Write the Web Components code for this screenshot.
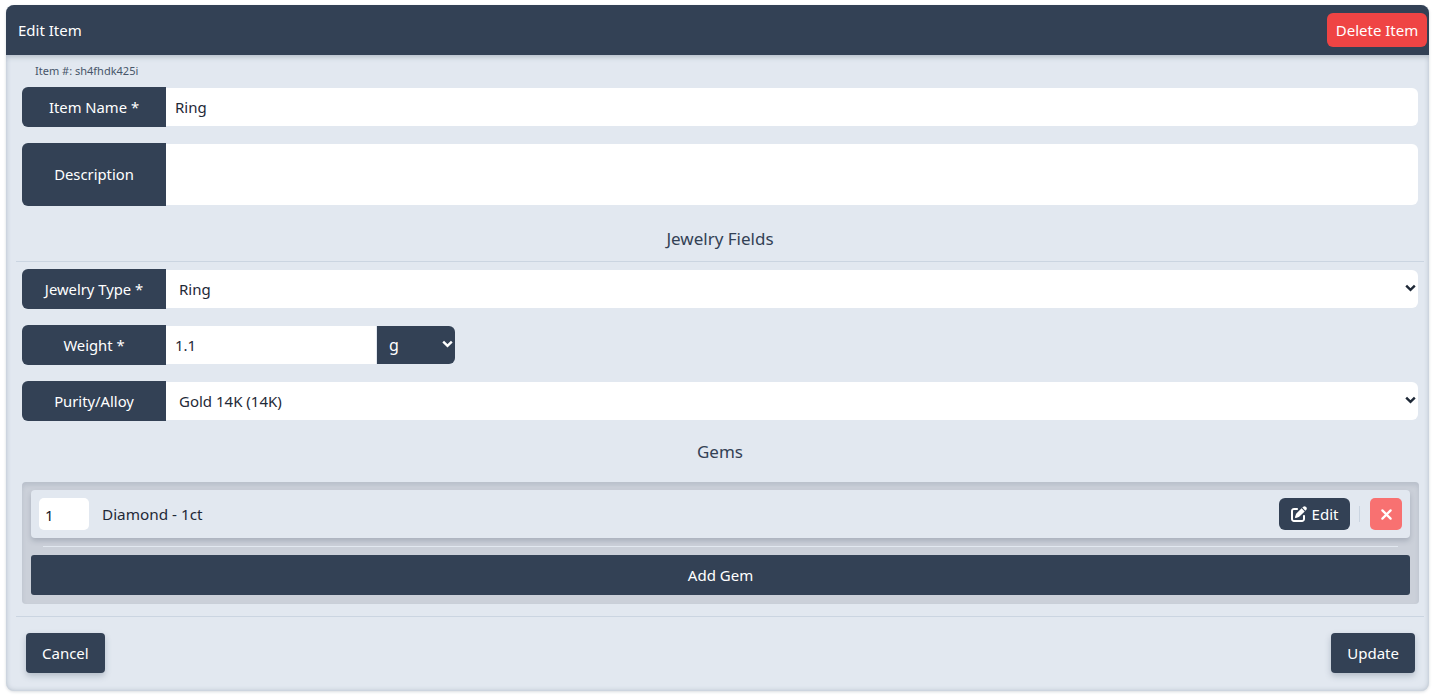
<!DOCTYPE html>
<html lang="en">
<head>
<meta charset="UTF-8">
<title>Edit Item</title>
<style>
  html, body { margin: 0; background: #fff; }
  body { padding: 5px 16px 6px 6px; font-family: "Noto Sans", "Liberation Sans", sans-serif; font-size: 15px; color: #1f2937; }
</style>
</head>
<body>

<template id="modal-card-template">
  <style>
    :host { display: block; height: 686px; background: #e2e8f0; border-radius: 8px; box-shadow: inset 0 0 5px rgba(71,85,105,.3), 0 1px 3px rgba(71,85,105,.2); overflow: hidden; }
    header { height: 50px; box-sizing: border-box; display: flex; align-items: center; justify-content: space-between; padding: 0 2px 0 12px; background: #334155; color: #fff; box-shadow: 0 2px 5px rgba(71,85,105,.3); position: relative; }
    .title { font-size: 15px; }
    .body { padding: 8px 5px 0 10px; }
  </style>
  <header><span class="title"><slot name="title"></slot></span><slot name="action"></slot></header>
  <div class="body"><slot></slot></div>
</template>

<template id="app-button-template">
  <style>
    :host { display: inline-flex; }
    button { all: unset; box-sizing: border-box; display: flex; align-items: center; justify-content: center; gap: 5px; width: 100%; height: 40px; padding: 0 16px; border-radius: 4px; background: #334155; color: #fff; font: inherit; font-size: 15px; box-shadow: 0 3px 6px rgba(71,85,105,.3); white-space: nowrap; }
    :host([variant="danger"]) button { width: 100px; height: 34px; padding: 0; border-radius: 6px; background: #ef4444; box-shadow: none; }
    :host([variant="flat"]) button { border-radius: 3px; box-shadow: none; }
    :host([variant="small"]) button { width: 71px; height: 32px; padding: 0; border-radius: 6px; box-shadow: none; }
  </style>
  <button type="button"><slot></slot></button>
</template>

<template id="field-row-template">
  <style>
    :host { display: flex; margin: 0 6px; align-items: stretch; height: 40px; }
    :host([tall]) { height: 63px; }
    label { flex: none; width: 144px; display: flex; align-items: center; justify-content: center; padding-bottom: 1px; box-sizing: border-box; background: #334155; color: #fff; border-radius: 6px 0 0 6px; font-size: 14.8px; }
    .control { flex: 1; display: flex; min-width: 0; padding: 1px 0; box-sizing: border-box; }
    slot:not([name])::slotted(*) { flex: 1; min-width: 0; }
  </style>
  <label><slot name="label"></slot></label>
  <div class="control"><slot></slot></div>
</template>

<template id="text-input-template">
  <style>
    :host { display: flex; background: #fff; border-radius: 0 6px 6px 0; align-items: center; }
    input { all: unset; box-sizing: border-box; width: 100%; height: 100%; padding: 0 9px; color: #1f2937; font: inherit; font-size: 15px; }
  </style>
  <input type="text">
</template>

<template id="select-input-template">
  <style>
    :host { display: block; position: relative; background: #fff; border-radius: 0 6px 6px 0; color: #1f2937; }
    :host([dark]) { background: #334155; color: #fff; }
    select { all: unset; box-sizing: border-box; display: block; width: 100%; height: 38px; padding: 0 13px; font: inherit; font-size: 15px; line-height: 38px; }
    :host([dark]) select { font-size: 16px; padding: 0 12px; }
    svg { position: absolute; right: 2px; top: 14px; width: 11px; height: 8px; fill: none; stroke: currentColor; stroke-width: 2.4; pointer-events: none; }
  </style>
  <select></select>
  <svg viewBox="0 0 11 8"><path d="M1.2 1.6 5.5 5.9 9.8 1.6"/></svg>
</template>

<template id="section-title-template">
  <style>
    :host { display: flex; align-items: center; justify-content: center; font-size: 17px; color: #334155; }
    :host([ruled]) { height: 56px; box-sizing: border-box; padding-top: 9px; border-bottom: 1px solid #cbd5e1; }
  </style>
  <slot></slot>
</template>

<template id="gem-panel-template">
  <style>
    :host { display: block; margin: 0 5px 0 6px; padding: 8px 9px 9px; background: #cbd0d9; border-radius: 4px; box-shadow: inset 0 3px 4px rgba(100,116,139,.18); }
    hr { height: 1px; border: 0; margin: 8px 12px; background: #e2e8f0; }
  </style>
  <slot name="item"></slot>
  <hr>
  <slot></slot>
</template>

<template id="gem-item-template">
  <style>
    :host { display: flex; align-items: center; height: 48px; box-sizing: border-box; padding: 0 8px; background: #e2e8f0; border-radius: 4px; box-shadow: 0 3px 5px rgba(71,85,105,.25); }
    input { all: unset; box-sizing: border-box; width: 50px; height: 32px; padding: 2px 6px 0; background: #fff; border-radius: 5px; color: #111827; font: inherit; font-size: 15px; }
    .name { margin-left: 13px; flex: 1; font-size: 15.3px; color: #1f2937; }
    .sep { width: 1px; height: 16px; margin: 0 10px 0 9px; background: #cbd5e1; }
  </style>
  <input type="text" value="1">
  <span class="name"><slot name="name"></slot></span>
  <slot name="edit"></slot>
  <span class="sep"></span>
  <slot name="remove"></slot>
</template>

<template id="icon-button-template">
  <style>
    :host { display: inline-flex; align-items: center; justify-content: center; width: 32px; height: 32px; border-radius: 5px; background: #f87171; }
    svg { width: 11px; height: 11px; stroke: #fff; stroke-width: 2.4; stroke-linecap: round; fill: none; }
  </style>
  <svg viewBox="0 0 12 12"><path d="M1.5 1.5 10.5 10.5M10.5 1.5 1.5 10.5"/></svg>
</template>

<template id="form-footer-template">
  <style>
    :host { display: flex; justify-content: space-between; margin-top: 12px; padding: 16px 9px 0 10px; border-top: 1px solid #cbd5e1; }
  </style>
  <slot></slot>
</template>

<modal-card>
  <span slot="title">Edit Item</span>
  <app-button slot="action" variant="danger">Delete Item</app-button>

  <small-note>Item #: sh4fhdk425i</small-note>

  <field-row>
    <span slot="label">Item Name *</span>
    <text-input value="Ring"></text-input>
  </field-row>
  <field-row tall style="margin-top:16px">
    <span slot="label">Description</span>
    <text-input></text-input>
  </field-row>

  <section-title ruled>Jewelry Fields</section-title>

  <field-row style="margin-top:7px">
    <span slot="label">Jewelry Type *</span>
    <select-input value="Ring"></select-input>
  </field-row>
  <field-row style="margin-top:16px">
    <span slot="label">Weight *</span>
    <text-input value="1.1" style="flex:none;width:210px;border-radius:0"></text-input>
    <select-input dark value="g" style="flex:none;width:78px;margin-left:1px"></select-input>
  </field-row>
  <field-row style="margin-top:16px">
    <span slot="label">Purity/Alloy</span>
    <select-input value="Gold 14K (14K)"></select-input>
  </field-row>

  <section-title style="height:61px">Gems</section-title>

  <gem-panel>
    <gem-item slot="item">
      <span slot="name">Diamond - 1ct</span>
      <app-button slot="edit" variant="small"><svg viewBox="0 0 512 512" width="16" height="16" fill="#fff"><path d="M471.6 21.7c-21.9-21.9-57.3-21.9-79.2 0L362.3 51.7l97.9 97.9 30.1-30.1c21.9-21.9 21.9-57.3 0-79.2L471.6 21.7zm-299.2 220c-6.1 6.1-10.8 13.6-13.5 21.9l-29.6 88.8c-2.9 8.6-.6 18.1 5.8 24.6s15.9 8.7 24.6 5.8l88.8-29.6c8.2-2.7 15.7-7.4 21.9-13.5L437.7 172.3 339.7 74.3 172.4 241.7zM96 64C43 64 0 107 0 160V416c0 53 43 96 96 96H352c53 0 96-43 96-96V320c0-17.7-14.3-32-32-32s-32 14.3-32 32v96c0 17.7-14.3 32-32 32H96c-17.7 0-32-14.3-32-32V160c0-17.7 14.3-32 32-32h96c17.7 0 32-14.3 32-32s-14.3-32-32-32H96z"/></svg>Edit</app-button>
      <icon-button slot="remove"></icon-button>
    </gem-item>
    <app-button variant="flat" style="display:flex">Add Gem</app-button>
  </gem-panel>

  <form-footer>
    <app-button>Cancel</app-button>
    <app-button>Update</app-button>
  </form-footer>
</modal-card>

<script>
  // shadow root from the template with the same name as the tag
  class BaseElement extends HTMLElement {
    constructor() {
      super();
      const template = document.getElementById(this.localName + '-template');
      this.attachShadow({ mode: 'open' }).appendChild(template.content.cloneNode(true));
    }
  }

  class TextInput extends BaseElement {
    connectedCallback() {
      this.shadowRoot.querySelector('input').setAttribute('value', this.getAttribute('value') || '');
    }
  }

  class SelectInput extends BaseElement {
    connectedCallback() {
      const option = document.createElement('option');
      option.textContent = this.getAttribute('value');
      this.shadowRoot.querySelector('select').appendChild(option);
    }
  }

  class SmallNote extends HTMLElement {
    constructor() {
      super();
      this.attachShadow({ mode: 'open' }).innerHTML = `
        <style>:host { display: block; height: 24px; box-sizing: border-box; padding-left: 19px; font-size: 11px; line-height: 16px; color: #475569; }</style>
        <slot></slot>`;
    }
  }

  customElements.define('modal-card', class extends BaseElement {});
  customElements.define('app-button', class extends BaseElement {});
  customElements.define('field-row', class extends BaseElement {});
  customElements.define('section-title', class extends BaseElement {});
  customElements.define('gem-panel', class extends BaseElement {});
  customElements.define('gem-item', class extends BaseElement {});
  customElements.define('icon-button', class extends BaseElement {});
  customElements.define('form-footer', class extends BaseElement {});
  customElements.define('text-input', TextInput);
  customElements.define('select-input', SelectInput);
  customElements.define('small-note', SmallNote);
</script>

</body>
</html>
